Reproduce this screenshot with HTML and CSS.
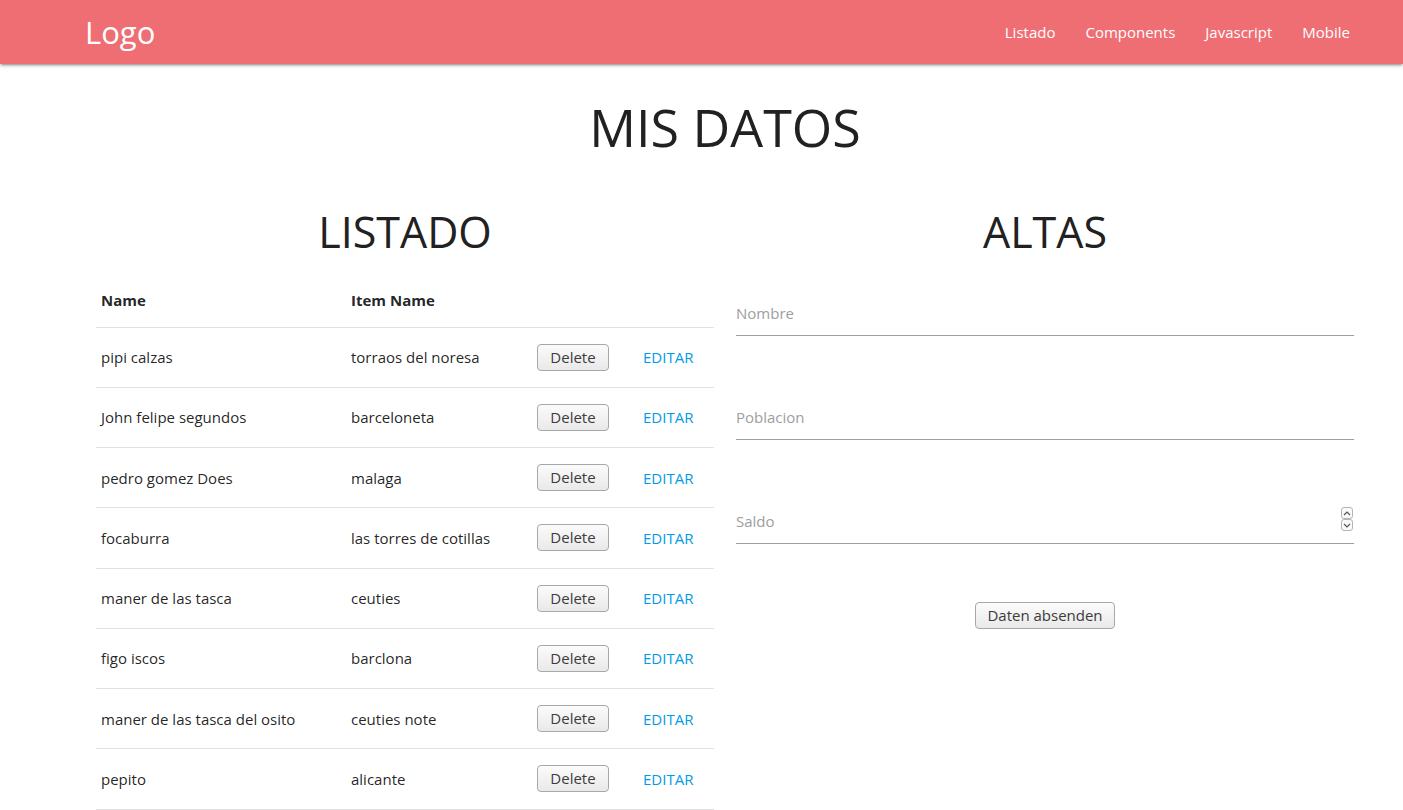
FILE: index.html
```html
<!DOCTYPE html>
<html lang="es">
<head>
<meta charset="utf-8">
<title>Mis datos</title>
<link rel="stylesheet" href="styles.css">
</head>
<body>
<nav class="navbar">
  <div class="nav-wrapper">
    <a class="brand-logo" href="#">Logo</a>
    <ul class="nav-links">
      <li><a href="#">Listado</a></li>
      <li><a href="#">Components</a></li>
      <li><a href="#">Javascript</a></li>
      <li><a href="#">Mobile</a></li>
    </ul>
  </div>
</nav>

<main class="container">
  <h2 class="page-title">MIS DATOS</h2>
  <div class="row">
    <section class="col">
      <h3 class="section-title">LISTADO</h3>
      <table class="data-table">
        <thead>
          <tr><th class="c-name">Name</th><th class="c-item">Item Name</th><th class="c-del"></th><th class="c-edit"></th></tr>
        </thead>
        <tbody>
          <tr><td>pipi calzas</td><td>torraos del noresa</td><td><button class="btn">Delete</button></td><td><a class="edit" href="#">EDITAR</a></td></tr>
          <tr><td>John felipe segundos</td><td>barceloneta</td><td><button class="btn">Delete</button></td><td><a class="edit" href="#">EDITAR</a></td></tr>
          <tr><td>pedro gomez Does</td><td>malaga</td><td><button class="btn">Delete</button></td><td><a class="edit" href="#">EDITAR</a></td></tr>
          <tr><td>focaburra</td><td>las torres de cotillas</td><td><button class="btn">Delete</button></td><td><a class="edit" href="#">EDITAR</a></td></tr>
          <tr><td>maner de las tasca</td><td>ceuties</td><td><button class="btn">Delete</button></td><td><a class="edit" href="#">EDITAR</a></td></tr>
          <tr><td>figo iscos</td><td>barclona</td><td><button class="btn">Delete</button></td><td><a class="edit" href="#">EDITAR</a></td></tr>
          <tr><td>maner de las tasca del osito</td><td>ceuties note</td><td><button class="btn">Delete</button></td><td><a class="edit" href="#">EDITAR</a></td></tr>
          <tr><td>pepito</td><td>alicante</td><td><button class="btn">Delete</button></td><td><a class="edit" href="#">EDITAR</a></td></tr>
        </tbody>
      </table>
    </section>
    <section class="col">
      <h3 class="section-title">ALTAS</h3>
      <form class="form">
        <div class="input-field"><input type="text" placeholder="Nombre"></div>
        <div class="input-field"><input type="text" placeholder="Poblacion"></div>
        <div class="input-field">
          <input type="text" placeholder="Saldo">
          <span class="spinner">
            <span class="spin-btn"><svg width="8" height="5" viewBox="0 0 8 5"><path d="M1 4 L4 1 L7 4" fill="none" stroke="#555" stroke-width="1.2"/></svg></span>
            <span class="spin-btn"><svg width="8" height="5" viewBox="0 0 8 5"><path d="M1 1 L4 4 L7 1" fill="none" stroke="#555" stroke-width="1.2"/></svg></span>
          </span>
        </div>
        <div class="submit-row"><button type="button" class="btn btn-submit">Daten absenden</button></div>
      </form>
    </section>
  </div>
</main>
</body>
</html>
```

FILE: styles.css
```css
* { box-sizing: border-box; }

html, body {
  margin: 0;
  padding: 0;
}

body {
  font-family: "Open Sans", "Noto Sans", sans-serif;
  font-size: 15px;
  color: rgba(0, 0, 0, 0.87);
  background: #fff;
}

a { text-decoration: none; }

/* NAVBAR */
.navbar {
  height: 64px;
  background: #ee6e73;
  color: #fff;
  box-shadow: 0 2px 2px 0 rgba(0,0,0,.14), 0 3px 1px -2px rgba(0,0,0,.12), 0 1px 5px 0 rgba(0,0,0,.2);
}

.nav-wrapper {
  width: 1280px;
  margin-left: 85px;
  height: 64px;
  display: flex;
  align-items: center;
  justify-content: space-between;
}

.brand-logo {
  color: #fff;
  font-size: 31px;
  line-height: 64px;
}

.nav-links {
  list-style: none;
  margin: 0;
  padding: 0;
  display: flex;
}

.nav-links a {
  display: block;
  color: #fff;
  padding: 0 15px;
  font-size: 15px;
  line-height: 64px;
}

/* CONTENT */
.container {
  width: 1280px;
  margin-left: 85px;
}

.page-title {
  margin: 34px 0 0;
  font-size: 52px;
  font-weight: 400;
  line-height: 58px;
  text-align: center;
  color: #212121;
}

.row {
  display: flex;
}

.col {
  width: 640px;
  padding: 0 11px;
}

.section-title {
  margin: 52px 0 0;
  font-size: 43px;
  font-weight: 400;
  line-height: 48px;
  text-align: center;
  color: #212121;
}

/* TABLE */
.data-table {
  width: 618px;
  border-collapse: collapse;
  margin-top: 17px;
  table-layout: fixed;
}

.data-table th,
.data-table td {
  text-align: left;
  padding: 0 5px;
  vertical-align: middle;
}

.data-table th {
  font-weight: 700;
  height: 54px;
  font-size: 15px;
}

.data-table tr {
  border-bottom: 1px solid rgba(0, 0, 0, 0.12);
}

.data-table td {
  height: 60.25px;
}

.c-name { width: 250px; }
.c-item { width: 186px; }
.c-del { width: 106px; }
.c-edit { width: 76px; }

.btn {
  font-family: inherit;
  font-size: 15px;
  color: #3c3c3c;
  background: linear-gradient(#fbfbfb, #e9e9e9);
  border: 1px solid #a8a8a8;
  border-radius: 4px;
  height: 27px;
  padding: 0 12px;
  line-height: 25px;
  white-space: nowrap;
  cursor: pointer;
}

.data-table .btn {
  width: 72px;
  padding: 0;
}

.edit {
  color: #039be5;
  font-size: 15px;
}

/* FORM */
.form {
  padding-top: 34px;
}

.input-field {
  position: relative;
  height: 46px;
  margin-bottom: 58px;
}

.input-field input {
  width: 100%;
  height: 46px;
  border: none;
  border-bottom: 1px solid #9e9e9e;
  outline: none;
  padding: 0;
  font-family: inherit;
  font-size: 15px;
  color: #212121;
  background: transparent;
}

.input-field input::placeholder {
  color: #9e9e9e;
}

.spinner {
  position: absolute;
  right: 1px;
  top: 9px;
  display: flex;
  flex-direction: column;
}

.spin-btn {
  width: 12px;
  height: 12px;
  border: 1px solid #b5b5b5;
  border-radius: 3px;
  display: flex;
  align-items: center;
  justify-content: center;
  background: #fafafa;
}

.submit-row {
  display: flex;
  justify-content: center;
  margin-top: 3px;
}

.btn-submit {
  height: 27px;
  width: 140px;
  padding: 0;
  line-height: 25px;
}
```
